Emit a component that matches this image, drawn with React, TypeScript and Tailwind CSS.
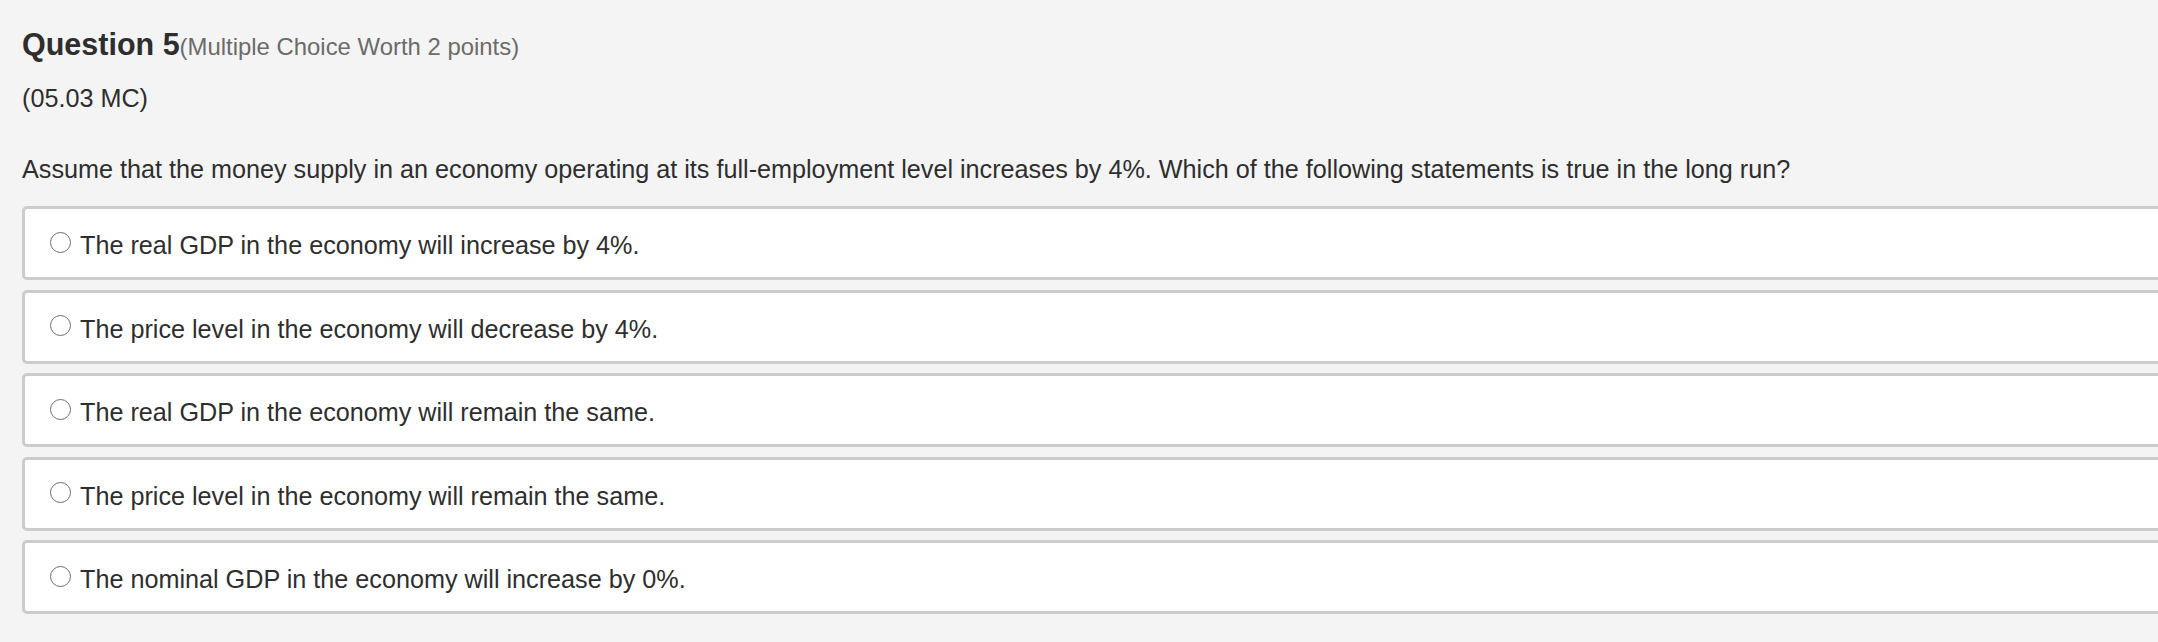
import React from "react";

const options = [
  "The real GDP in the economy will increase by 4%.",
  "The price level in the economy will decrease by 4%.",
  "The real GDP in the economy will remain the same.",
  "The price level in the economy will remain the same.",
  "The nominal GDP in the economy will increase by 0%.",
];

const App = () => {
  return (
    <div
      className="w-screen h-[642px] overflow-hidden bg-[#f4f4f4] text-[#2e2e2e]"
      style={{ fontFamily: '"Liberation Sans", Arial, sans-serif' }}
    >
      <div className="pl-[22px] pt-[26px] w-[2220px]">
        <h2 className="text-[30.5px] leading-[36px] font-bold text-[#2e2e2e]">
          Question 5
          <span className="text-[23.9px] font-normal text-[#6b6b6b]">
            (Multiple Choice Worth 2 points)
          </span>
        </h2>
        <div className="mt-[18px] text-[25.2px] leading-[30px]">(05.03 MC)</div>
        <p className="mt-[41px] text-[25.2px] leading-[30px]">
          Assume that the money supply in an economy operating at its full-employment level increases by 4%. Which of
          the following statements is true in the long run?
        </p>
        <div className="mt-[22px] flex flex-col gap-[9.5px]">
          {options.map((option, i) => (
            <label
              key={i}
              className="flex items-center h-[74px] bg-white border-[3px] border-[#cccccc] rounded-[5px] pl-[25px]"
            >
              <span className="shrink-0 w-[21px] h-[21px] rounded-full border-[1.5px] border-[#6e6e6e] bg-white -mt-[2px]" />
              <span className="ml-[9px] mt-[4px] text-[25.2px] leading-[30px] text-[#2e2e2e]">{option}</span>
            </label>
          ))}
        </div>
      </div>
    </div>
  );
};

export default App;
